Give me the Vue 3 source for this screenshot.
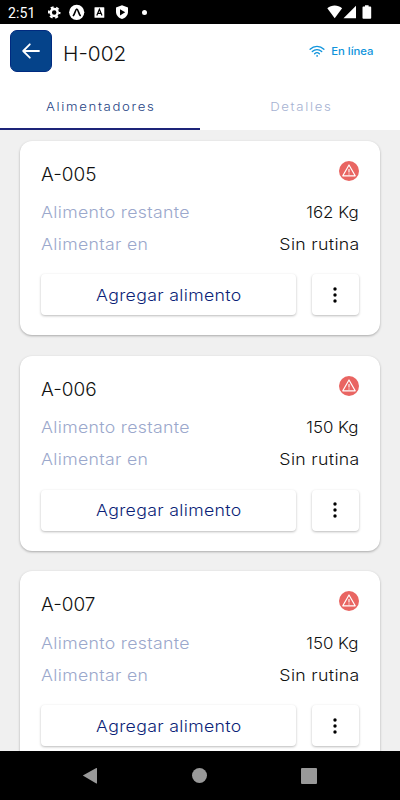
<script setup>
const feeders = [
  { name: 'A-005', left: '162 Kg', next: 'Sin rutina' },
  { name: 'A-006', left: '150 Kg', next: 'Sin rutina' },
  { name: 'A-007', left: '150 Kg', next: 'Sin rutina' },
]
</script>

<template>
  <div class="screen">
    <div class="status">
      <span class="clock">2:51</span>
      <svg class="s-icons" width="94" height="24" viewBox="0 0 94 24">
        <circle cx="6.2" cy="12.5" r="3.5" fill="none" stroke="#fff" stroke-width="2.5" />
        <circle cx="6.2" cy="12.5" r="5.3" fill="none" stroke="#fff" stroke-width="2" stroke-dasharray="2.9 2.65" stroke-dashoffset="1.4" />
        <circle cx="28.7" cy="12.3" r="7.6" fill="#fff" />
        <path d="M25.4 15.5C26.8 14 27.5 9.2 28.8 9.2S30.8 14 32.2 15.5" fill="none" stroke="#000" stroke-width="1.7" stroke-linecap="round" />
        <rect x="46.5" y="7.2" width="9.8" height="10.6" rx=".6" fill="#fff" />
        <path d="M48.8 15.5L51.4 9.2L54 15.5M49.8 13.4H53" fill="none" stroke="#000" stroke-width="1.2" />
        <path d="M74 5.3L80 7.5V11.8C80 15.3 77.5 18 74 19C70.5 18 68 15.3 68 11.8V7.5Z" fill="#fff" />
        <path d="M72 9.2V15.4L77.2 12.3Z" fill="#000" />
      </svg>
      <i class="dot"></i>
      <svg class="s-right" width="46" height="24" viewBox="0 0 46 24" fill="#fff">
        <path d="M.3 8.2C4.6 4.6 10.8 4.6 15.1 8.2L7.7 18.2Z" />
        <path d="M29 5.8V18.3H16.5Z" />
        <path d="M38 6.6V5.3H41.6V6.6H43.3Q44.2 6.6 44.2 7.5V18Q44.2 18.8 43.3 18.8H36.4Q35.5 18.8 35.5 18V7.5Q35.5 6.6 36.4 6.6Z" />
      </svg>
    </div>

    <header class="header">
      <button class="back" aria-label="Volver">
        <svg width="18" height="16" viewBox="0 0 18 16" fill="none" stroke="#fff" stroke-width="1.8" stroke-linecap="round" stroke-linejoin="round">
          <path d="M17 8H1.4M7.8 1.3L1.2 8L7.8 14.7" />
        </svg>
      </button>
      <h1>H-002</h1>
      <div class="online">
        <svg width="16" height="12" viewBox="0 0 16 12" fill="none" stroke="#1094dc" stroke-width="1.35" stroke-linecap="round">
          <path d="M1.1 4.2C5 .4 11 .4 14.9 4.2M3.3 6.5C6 4 10 4 12.7 6.5M5.6 8.7C7 7.5 9 7.5 10.4 8.7" />
          <circle cx="8" cy="10.9" r=".5" fill="#1094dc" stroke-width=".6" />
        </svg>
        <span>En línea</span>
      </div>
    </header>

    <nav class="tabs">
      <a class="tab active"><span>Alimentadores</span></a>
      <a class="tab"><span>Detalles</span></a>
    </nav>

    <main class="list">
      <section v-for="f in feeders" :key="f.name" class="card">
        <div class="top">
          <h2>{{ f.name }}</h2>
          <svg class="warn" width="20" height="20" viewBox="0 0 20 20">
            <circle cx="10" cy="10" r="10" fill="#e96562" />
            <path d="M10 4L16.2 14.8H3.8Z" fill="none" stroke="#fff" stroke-width="1.2" stroke-linejoin="round" />
            <path d="M10 8V11.4M10 12.5V13.5" stroke="#fff" stroke-width="1.1" />
          </svg>
        </div>
        <div class="row"><span class="label">Alimento restante</span><span class="value kg">{{ f.left }}</span></div>
        <div class="row"><span class="label">Alimentar en</span><span class="value">{{ f.next }}</span></div>
        <div class="actions">
          <button class="btn add"><span>Agregar alimento</span></button>
          <button class="btn more" aria-label="Más">
            <svg width="4" height="16" viewBox="0 0 4 16"><circle cx="2" cy="2" r="1.7" /><circle cx="2" cy="8" r="1.7" /><circle cx="2" cy="14" r="1.7" /></svg>
          </button>
        </div>
      </section>
    </main>

    <div class="navbar">
      <svg width="16" height="18" viewBox="0 0 16 18"><path d="M.8 8.6L14.3 1Q15 .7 15 1.5V16Q15 16.8 14.3 16.4Z" fill="#999" /></svg>
      <i class="home"></i>
      <i class="recent"></i>
    </div>
  </div>
</template>

<style>
body { background: #f0f0f0; }
</style>

<style scoped>
.screen {
  width: 400px; height: 800px; overflow: hidden;
  display: flex; flex-direction: column;
  background: #f0f0f0; color: #111;
  font-family: Inter, "Open Sans", sans-serif; font-weight: 260;
}
.status {
  flex: none; height: 24px; background: #000; color: #fff;
  display: flex; align-items: center; padding-left: 8px;
}
.clock { width: 40px; font: 400 14px/24px Roboto, sans-serif; padding-top: 1px; letter-spacing: .1px; }
.s-icons { flex: none; }
.dot { width: 5px; height: 5px; border-radius: 50%; background: #fff; }
.s-right { margin-left: auto; margin-right: 27px; }
.header { flex: none; box-sizing: border-box; height: 58px; background: #fff; display: flex; padding: 6px 26px 0 10px; }
button { border: 0; padding: 0; font-family: inherit; font-weight: inherit; }
.back {
  width: 42px; height: 42px; border-radius: 7px; background: #05438a;
  border: 1px solid #002a80;
  display: flex; align-items: center; justify-content: center;
}
h1, h2 { margin: 0; font-weight: inherit; transform-origin: left; }
h1 { font-size: 20px; line-height: 24px; margin: 12px 0 0 10.5px; transform: scaleX(1.04); }
.online {
  margin: 12px 0 0 auto; height: 18px; display: flex; align-items: center; gap: 6px;
  color: #1094dc; font-size: 10.3px; font-weight: 500;
}
.online svg { margin-right: 4px; }
.online span { transform: scaleX(1.1); transform-origin: right; }
.tabs { flex: none; height: 48px; display: flex; background: #fff; }
.tab {
  flex: 1; box-sizing: border-box; display: flex; align-items: center; justify-content: center;
  font-size: 12px; color: #a6b2d2; padding-top: 3px; border-bottom: 2px solid transparent; border-bottom-width: 2px;
}
.tab span { letter-spacing: 1.5px; transform: scaleX(1.1); margin-left: 2px; }
.tab.active { color: #264384; border-bottom-color: #1d2479; }
.list { flex: 1; min-height: 0; overflow: hidden; padding: 10.5px 20px 0 20px; }
.card {
  height: 194.7px; box-sizing: border-box; margin-bottom: 20.8px; padding: 20px 21px 0;
  border-radius: 12px; background: #fff; box-shadow: 0 1px 2.5px rgba(0, 0, 0, .3);
}
.top { display: flex; justify-content: space-between; height: 35.4px; }
h2 { font-size: 18px; line-height: 27px; transform: scaleX(1.055); }
.row { height: 32px; display: flex; justify-content: space-between; align-items: center; font-size: 16px; }
.label { color: #9ba8cc; letter-spacing: .3px; transform: scaleX(1.105); transform-origin: left; }
.value { letter-spacing: .3px; margin-right: -.3px; transform: scaleX(1.105); transform-origin: right; }
.value.kg { letter-spacing: 0; margin-right: 0; transform: scaleX(1.055); }
.actions { display: flex; gap: 15.5px; margin-top: 14.6px; }
.btn {
  height: 41px; background: #fff; border-radius: 4px; box-shadow: 0 1px 2.5px rgba(0, 0, 0, .27);
  display: flex; align-items: center; justify-content: center;
}
.add { flex: 1; font-size: 16px; color: #0c1f78; }
.add span { letter-spacing: .3px; transform: scaleX(1.105); }
.more { width: 47.5px; }
.navbar {
  flex: none; height: 49px; background: #000;
  display: flex; align-items: center; padding: 0 83px 0 82px; justify-content: space-between;
}
.home { width: 15px; height: 15px; border-radius: 50%; background: #999; }
.recent { width: 16px; height: 16px; border-radius: 1px; background: #999; }
</style>
